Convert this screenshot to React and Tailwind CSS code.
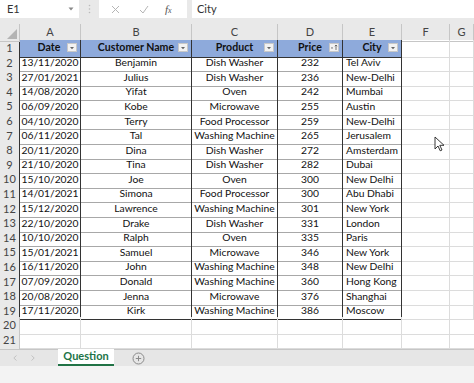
import React from 'react';

const rows = [
  ['13/11/2020', 'Benjamin', 'Dish Washer', '232', 'Tel Aviv'],
  ['27/01/2021', 'Julius', 'Dish Washer', '236', 'New-Delhi'],
  ['14/08/2020', 'Yifat', 'Oven', '242', 'Mumbai'],
  ['06/09/2020', 'Kobe', 'Microwave', '255', 'Austin'],
  ['04/10/2020', 'Terry', 'Food Processor', '259', 'New-Delhi'],
  ['06/11/2020', 'Tal', 'Washing Machine', '265', 'Jerusalem'],
  ['20/11/2020', 'Dina', 'Dish Washer', '272', 'Amsterdam'],
  ['21/10/2020', 'Tina', 'Dish Washer', '282', 'Dubai'],
  ['15/10/2020', 'Joe', 'Oven', '300', 'New Delhi'],
  ['14/01/2021', 'Simona', 'Food Processor', '300', 'Abu Dhabi'],
  ['15/12/2020', 'Lawrence', 'Washing Machine', '301', 'New York'],
  ['22/10/2020', 'Drake', 'Dish Washer', '331', 'London'],
  ['10/10/2020', 'Ralph', 'Oven', '335', 'Paris'],
  ['15/01/2021', 'Samuel', 'Microwave', '346', 'New York'],
  ['16/11/2020', 'John', 'Washing Machine', '348', 'New Delhi'],
  ['07/09/2020', 'Donald', 'Washing Machine', '360', 'Hong Kong'],
  ['20/08/2020', 'Jenna', 'Microwave', '376', 'Shanghai'],
  ['17/11/2020', 'Kirk', 'Washing Machine', '386', 'Moscow'],
];

const headers = ['Date', 'Customer Name', 'Product', 'Price', 'City'];
const letters = ['A', 'B', 'C', 'D', 'E', 'F', 'G'];
const cols = 'grid grid-cols-[20px_61px_111px_86px_65px_59px_48px_1fr]';

function FilterBtn({ sort }) {
  return (
    <span className="absolute right-[3px] top-[3px] w-[10px] h-[9px] bg-[#f2f2f2] border border-[#c8c8c8] flex items-center justify-center">
      {sort ? (
        <svg width="8" height="7" viewBox="0 0 8 7">
          <path d="M1 3.5h2L2 5z" fill="#555" />
          <path d="M6 6V1M4.8 2.2 6 1l1.2 1.2" stroke="#555" strokeWidth="0.8" fill="none" />
        </svg>
      ) : (
        <svg width="6" height="4" viewBox="0 0 6 4">
          <path d="M1 1h4L3 3.2z" fill="#666" />
        </svg>
      )}
    </span>
  );
}

function Blank({ last }) {
  return <div className={last ? 'border-b border-[#dcdcdc]' : 'border-r border-b border-[#dcdcdc]'} />;
}

export default function App() {
  return (
    <div className="relative w-[474px] h-[383px] overflow-hidden bg-white text-[10.3px] text-[#111] flex flex-col" style={{ fontFamily: 'Lato, "Open Sans", sans-serif' }}>
      {/* formula bar */}
      <div className="h-[24px] bg-[#e9e9e9] flex items-start shrink-0 text-[11px]">
        <div className="w-[79px] h-[18px] bg-white flex items-center justify-between pl-[7px] pr-[5px] text-[#333]">
          <span>E1</span>
          <svg width="6" height="4" viewBox="0 0 6 4"><path d="M0.5 0.5h5L3 3.5z" fill="#888" /></svg>
        </div>
        <div className="w-[20px] h-[18px] flex items-center justify-center">
          <svg width="3" height="10" viewBox="0 0 3 10"><circle cx="1.5" cy="1.5" r="0.8" fill="#bbb" /><circle cx="1.5" cy="5" r="0.8" fill="#bbb" /><circle cx="1.5" cy="8.5" r="0.8" fill="#bbb" /></svg>
        </div>
        <div className="w-[88px] h-[18px] bg-white flex items-center">
          <svg className="ml-[12px]" width="9" height="9" viewBox="0 0 9 9"><path d="M1 1l7 7M8 1 1 8" stroke="#b5b5b5" strokeWidth="1" /></svg>
          <svg className="ml-[19px]" width="10" height="9" viewBox="0 0 10 9"><path d="M1 5l3 3 5-7" stroke="#b5b5b5" strokeWidth="1" fill="none" /></svg>
          <span className="ml-[16px] italic text-[#555] text-[11px]" style={{ fontFamily: '"Liberation Serif", serif' }}>f<span className="text-[8px]">x</span></span>
        </div>
        <div className="w-[5px]" />
        <div className="flex-1 h-[18px] bg-white flex items-center pl-[5px] text-[#333]">City</div>
      </div>

      {/* column letters */}
      <div className={`${cols} h-[16px] bg-[#e9e9e9] text-[#444] text-[11px] shrink-0`}>
        <div className="border-r border-b border-[#c6c6c6] relative">
          <svg className="absolute right-[2px] bottom-[2px]" width="10" height="10" viewBox="0 0 10 10"><path d="M10 0V10H0z" fill="#b4b4b4" /></svg>
        </div>
        {letters.map((l) => (
          <div key={l} className="border-r border-b border-[#c6c6c6] flex items-center justify-center">{l}</div>
        ))}
        <div className="border-b border-[#c6c6c6] flex items-center pl-[6px]">H</div>
      </div>

      {/* sheet body */}
      <div className="flex-1 overflow-hidden">
        {/* header row */}
        <div className={`${cols} h-[14.6px]`}>
          <div className="bg-[#e9e9e9] border-r border-b border-r-[#333] border-b-[#c6c6c6] flex items-center justify-center text-[#444] text-[11px]">1</div>
          {headers.map((h, i) => (
            <div key={h} className="relative bg-[#8eaadb] border-r border-b border-[#333] flex items-center justify-center font-bold text-[#111] text-[10.6px]">
              <span className={i === 0 ? 'pr-[2px]' : ''}>{h}</span>
              <FilterBtn sort={i === 3} />
            </div>
          ))}
          <Blank />
          <Blank />
          <Blank last />
        </div>

        {rows.map((r, ri) => {
          const last = ri === rows.length - 1;
          return (
            <div key={ri} className={`${cols} h-[14.6px]`}>
              <div className="bg-[#e9e9e9] border-r border-b border-r-[#333] border-b-[#c6c6c6] flex items-center justify-center text-[#444] text-[11px]">{ri + 2}</div>
              {r.map((c, ci) => (
                <div key={ci} className={`border-r border-b border-r-[#333] ${last ? 'border-b-[#333]' : 'border-b-[#a8a8a8]'} flex items-center whitespace-nowrap overflow-hidden ${ci === 4 ? 'justify-start pl-[3px]' : 'justify-center'}`}>
                  {c}
                </div>
              ))}
              <Blank />
              <Blank />
              <Blank last />
            </div>
          );
        })}

        {[20, 21, 22].map((n) => (
          <div key={n} className={`${cols} h-[14.6px]`}>
            <div className="bg-[#e9e9e9] border-r border-b border-[#c6c6c6] flex items-center justify-center text-[#444] text-[11px]">{n}</div>
            {[0, 1, 2, 3, 4, 5].map((k) => (
              <Blank key={k} />
            ))}
            <Blank last />
          </div>
        ))}
      </div>

      {/* sheet tabs */}
      <div className="h-[17px] bg-[#e6e6e6] border-t border-[#c6c6c6] flex items-stretch shrink-0">
        <div className="w-[58px] flex items-center">
          <svg className="ml-[13px]" width="4" height="6" viewBox="0 0 4 6"><path d="M3.5 0.5 0.8 3l2.7 2.5" stroke="#c2c2c2" fill="none" /></svg>
          <svg className="ml-[14px]" width="4" height="6" viewBox="0 0 4 6"><path d="M0.5 0.5 3.2 3 0.5 5.5" stroke="#c2c2c2" fill="none" /></svg>
        </div>
        <div className="w-[56px] bg-white flex items-center justify-center font-bold text-[#217346] text-[11px] border-b-2 border-[#217346] -mt-px">Question</div>
        <div className="ml-[18px] flex items-center">
          <svg width="13" height="13" viewBox="0 0 13 13">
            <circle cx="6.5" cy="6.5" r="5.5" fill="none" stroke="#8a8a8a" strokeWidth="1" />
            <path d="M6.5 3.8v5.4M3.8 6.5h5.4" stroke="#8a8a8a" strokeWidth="1" />
          </svg>
        </div>
      </div>
      <div className="h-[17px] bg-[#f3f3f3] shrink-0" />

      {/* mouse cursor */}
      <svg className="absolute left-[434px] top-[136px]" width="11" height="16" viewBox="0 0 11 16">
        <path d="M1 1v12l3-3 2.2 4.8 1.8-.8L5.8 9.3H10z" fill="#fff" stroke="#222" strokeWidth="0.9" strokeLinejoin="round" />
      </svg>
    </div>
  );
}
